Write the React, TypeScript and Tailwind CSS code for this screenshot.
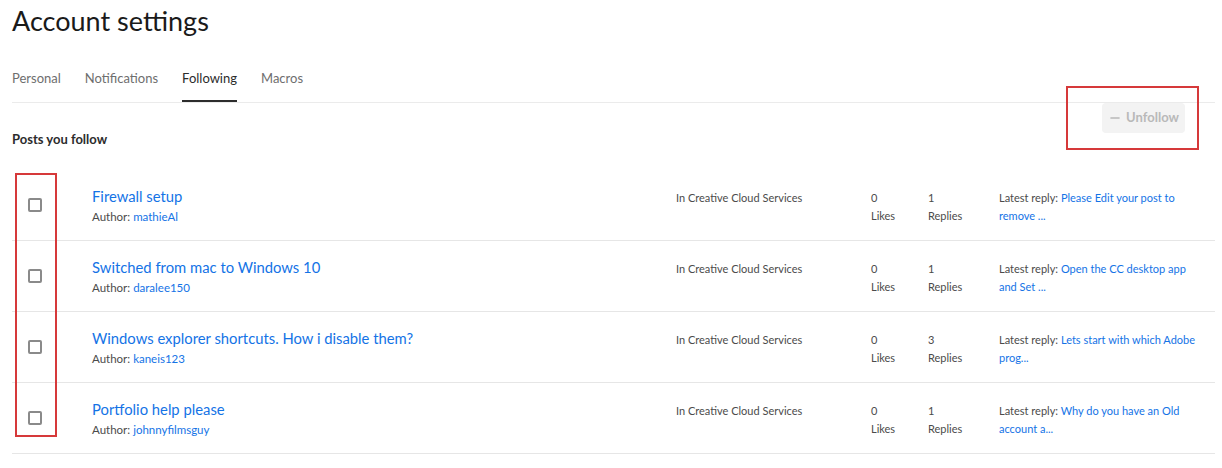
import { Minus } from "lucide-react";

type Post = {
  title: string;
  author: string;
  board: string;
  likes: number;
  replies: number;
  latest: string;
};

const posts: Post[] = [
  {
    title: "Firewall setup",
    author: "mathieAl",
    board: "In Creative Cloud Services",
    likes: 0,
    replies: 1,
    latest: "Please Edit your post to remove ...",
  },
  {
    title: "Switched from mac to Windows 10",
    author: "daralee150",
    board: "In Creative Cloud Services",
    likes: 0,
    replies: 1,
    latest: "Open the CC desktop app and Set ...",
  },
  {
    title: "Windows explorer shortcuts. How i disable them?",
    author: "kaneis123",
    board: "In Creative Cloud Services",
    likes: 0,
    replies: 3,
    latest: "Lets start with which Adobe prog...",
  },
  {
    title: "Portfolio help please",
    author: "johnnyfilmsguy",
    board: "In Creative Cloud Services",
    likes: 0,
    replies: 1,
    latest: "Why do you have an Old account a...",
  },
];

const tabs = ["Personal", "Notifications", "Following", "Macros"];

function PostRow({ post }: { post: Post }) {
  return (
    <div className="grid h-[71px] grid-cols-[80px_584px_195px_57px_71px_1fr] border-b border-[#e6e6e6]">
      <div className="flex items-center pl-4">
        <span className="block h-[14px] w-[14px] rounded-[2px] border-2 border-[#8a8a8a] bg-white" />
      </div>
      <div className="pt-[16px]">
        <div className="text-[14.8px] leading-[20px] text-[#1473e6]">{post.title}</div>
        <div className="pt-[2px] text-[11.5px] leading-[18px] text-[#4b4b4b]">
          Author: <span className="text-[#1473e6]">{post.author}</span>
        </div>
      </div>
      <div className="pt-[19px] text-[11px] leading-[18px] text-[#4b4b4b]">{post.board}</div>
      <div className="pt-[19px] text-[11px] leading-[18px] text-[#4b4b4b]">
        <div>{post.likes}</div>
        <div>Likes</div>
      </div>
      <div className="pt-[19px] text-[11px] leading-[18px] text-[#4b4b4b]">
        <div>{post.replies}</div>
        <div>Replies</div>
      </div>
      <div className="w-[198px] pt-[19px] text-[11px] leading-[18px] text-[#4b4b4b]">
        Latest reply: <span className="text-[#1473e6]">{post.latest}</span>
      </div>
    </div>
  );
}

export default function App() {
  return (
    <div className="relative min-h-[468px] bg-white pl-3 pr-[7px] font-['Lato',sans-serif]">
      <h1 className="pt-[3px] text-[27px] leading-[36px] text-[#1a1a1a]">Account settings</h1>

      <div className="mt-[24px] flex h-[40px] gap-6 border-b border-[#ebebeb] text-[13px]">
        {tabs.map((tab) => (
          <div
            key={tab}
            className={
              tab === "Following"
                ? "border-b-2 border-[#2c2c2c] pt-[6px] text-[#2c2c2c]"
                : "pt-[6px] text-[#6e6e6e]"
            }
          >
            {tab}
          </div>
        ))}
      </div>

      <div className="flex h-[67px] items-start justify-between">
        <div className="pt-[27px] text-[13px] font-bold text-[#2c2c2c]">Posts you follow</div>
        <button
          type="button"
          className="mr-[30px] flex h-[30px] w-[83px] items-center justify-center gap-1 rounded bg-[#f3f3f3] text-[13px] font-bold text-[#b9b9b9]"
        >
          <Minus size={14} strokeWidth={2.5} />
          Unfollow
        </button>
      </div>

      <div>
        {posts.map((post) => (
          <PostRow key={post.title} post={post} />
        ))}
      </div>

      <div className="pointer-events-none absolute left-[1066px] top-[86px] h-[64px] w-[133px] border-2 border-[#d6393a]" />
      <div className="pointer-events-none absolute left-[15px] top-[173px] h-[264px] w-[42px] border-2 border-[#d6393a]" />
    </div>
  );
}
